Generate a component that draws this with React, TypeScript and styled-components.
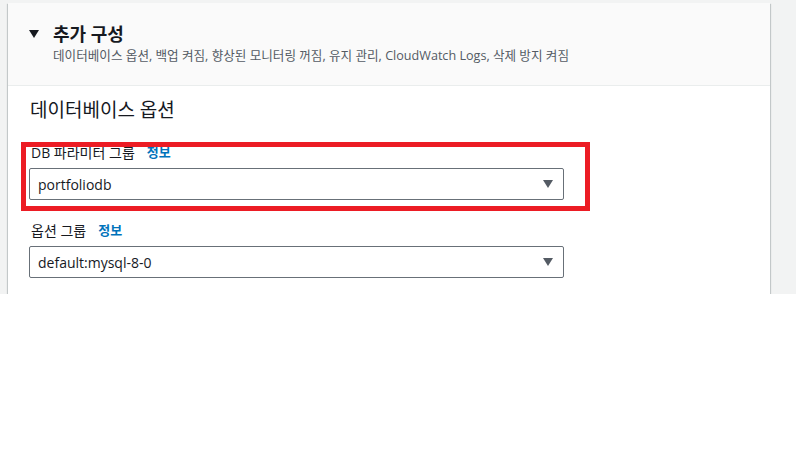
import React from "react";
import styled, { createGlobalStyle } from "styled-components";

const Global = createGlobalStyle`
  html, body { margin: 0; padding: 0; background: #ffffff; }
  body { font-family: "Open Sans", "Noto Sans CJK KR", sans-serif; color: #16191f; }
  * { box-sizing: border-box; }
`;

const Page = styled.div`
  background: #f2f3f3;
  height: 294px;
  padding: 3px 25px 0 8px;
  overflow: hidden;
`;

const Panel = styled.section`
  background: #ffffff;
  width: 762px;
  min-height: 400px;
  box-shadow: 0 1px 1px 0 rgba(0, 28, 36, 0.3), 1px 1px 1px 0 rgba(0, 28, 36, 0.15),
    -1px 1px 1px 0 rgba(0, 28, 36, 0.15);
`;

const Header = styled.header`
  background: #fafafa;
  height: 83px;
  border-bottom: 1px solid #eaeded;
  padding: 19px 20px 0 21px;
  display: flex;
  gap: 14px;
`;

const Caret = styled.svg`
  flex: none;
  margin-top: 8px;
`;

const HeaderText = styled.div`
  display: flex;
  flex-direction: column;
`;

const Title = styled.h2`
  margin: 0;
  font-size: 18px;
  line-height: 24px;
  font-weight: 700;
  color: #16191f;
`;

const Description = styled.p`
  margin: 0;
  font-size: 12.6px;
  line-height: 20px;
  color: #545b64;
`;

const Content = styled.div`
  padding: 12px 20px 0 21px;
  display: flex;
  flex-direction: column;
`;

const SectionTitle = styled.h3`
  margin: 0 0 20px 1px;
  font-size: 19px;
  line-height: 24px;
  font-weight: 400;
  color: #16191f;
`;

const Field = styled.div`
  position: relative;
  display: flex;
  flex-direction: column;
  gap: 5px;
  margin-bottom: 20px;
`;

const Highlight = styled.div`
  position: absolute;
  top: 0;
  left: -8px;
  width: 569px;
  height: 69px;
  border: 5px solid #ec1c24;
  pointer-events: none;
`;

const LabelRow = styled.div`
  display: flex;
  align-items: center;
  gap: 12px;
  padding-left: 2px;
  font-size: 14px;
  line-height: 21px;
  color: #16191f;
`;

const InfoLink = styled.a`
  color: #0073bb;
  font-weight: 700;
  font-size: 13px;
  text-decoration: none;
`;

const Select = styled.div`
  width: 535px;
  height: 32px;
  border: 1px solid #687078;
  border-radius: 2px;
  display: flex;
  align-items: center;
  justify-content: space-between;
  padding: 0 10px 0 8px;
  font-size: 14px;
  color: #16191f;
`;

const SelectCaret = styled.svg`
  flex: none;
`;

const fields = [
  { label: "DB 파라미터 그룹", value: "portfoliodb", highlighted: true },
  { label: "옵션 그룹", value: "default:mysql-8-0", highlighted: false },
];

export default function App() {
  return (
    <>
      <Global />
      <Page>
        <Panel>
          <Header>
            <Caret width="10" height="8" viewBox="0 0 10 8">
              <polygon points="0,0 10,0 5,8" fill="#16191f" />
            </Caret>
            <HeaderText>
              <Title>추가 구성</Title>
              <Description>
                데이터베이스 옵션, 백업 켜짐, 향상된 모니터링 꺼짐, 유지 관리, CloudWatch Logs, 삭제 방지 켜짐
              </Description>
            </HeaderText>
          </Header>
          <Content>
            <SectionTitle>데이터베이스 옵션</SectionTitle>
            {fields.map((f) => (
              <Field key={f.label}>
                <LabelRow>
                  <span>{f.label}</span>
                  <InfoLink>정보</InfoLink>
                </LabelRow>
                <Select>
                  <span>{f.value}</span>
                  <SelectCaret width="10" height="8" viewBox="0 0 10 8">
                    <polygon points="0,0 10,0 5,8" fill="#545b64" />
                  </SelectCaret>
                </Select>
                {f.highlighted && <Highlight />}
              </Field>
            ))}
          </Content>
        </Panel>
      </Page>
    </>
  );
}
